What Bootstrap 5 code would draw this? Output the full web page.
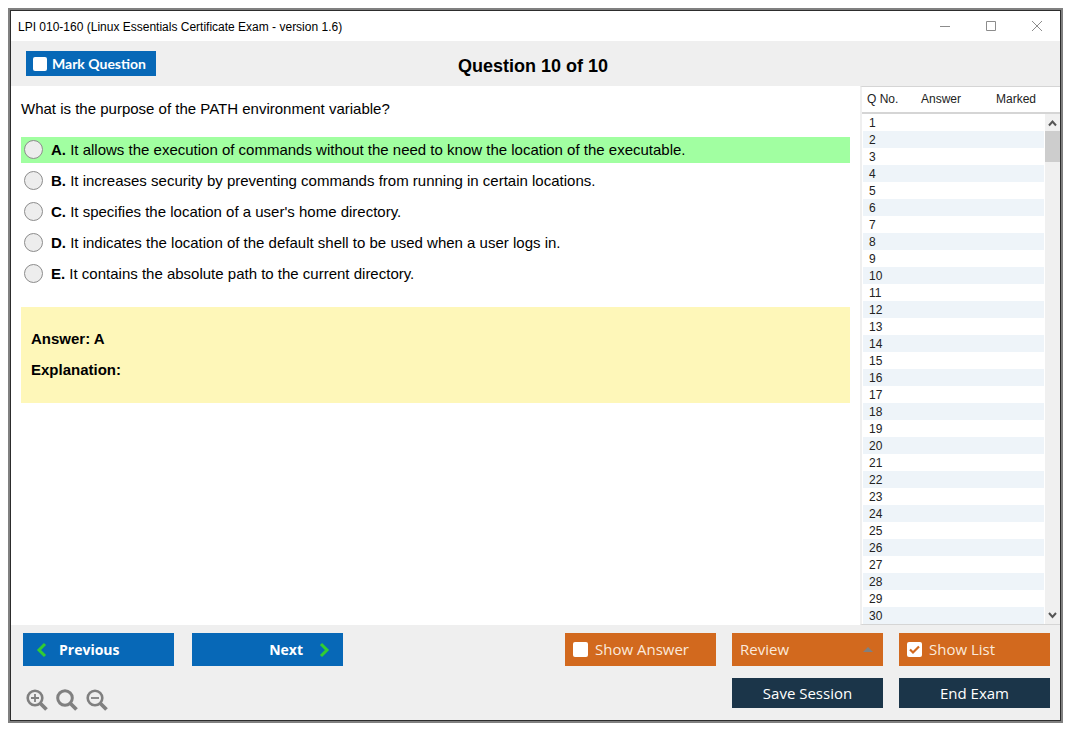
<!DOCTYPE html>
<html lang="en">
<head>
<meta charset="utf-8">
<meta name="viewport" content="width=device-width, initial-scale=1">
<title>LPI 010-160 Exam</title>
<link href="https://cdn.jsdelivr.net/npm/bootstrap@5.3.0/dist/css/bootstrap.min.css" rel="stylesheet">
<style>
  body { font-family: "Liberation Sans", Arial, sans-serif; font-size: 15px; color: #000; background: #fff; padding: 8px 12px 12px 8px; min-height: 100vh; }
  .exam-window { border: 2px solid #808080; }
  .exam-inner { border: 1px solid #2d2d2d; }
  .titlebar { height: 30px; padding: 2px 17px 0 7px; font-size: 12px; }
  .win-controls { gap: 34px; padding-bottom: 2px; }
  .win-btn { border: 0; background: none; padding: 0; width: 12px; height: 12px; display: flex; }
  .exam-head { display: grid; grid-template-columns: 1fr auto 1fr; height: 45px; padding: 0 20px 0 15px; background: #efefef; }
  .exam-head h1 { font-size: 18px; line-height: 24px; padding-top: 4px; }
  .flat { border: 0; border-radius: 0; font-family: "Open Sans", "Noto Sans", sans-serif; color: #fff; display: flex; align-items: center; }
  .flat input { appearance: none; flex: none; border-radius: 2px; background: #fff; margin: 0; }
  .mark-q { background: #0768b7; width: 130px; height: 25px; padding: 0 7px; gap: 5px; font-family: Lato, "Open Sans", sans-serif; font-size: 14px; font-weight: 700; }
  .mark-q input { width: 14px; height: 14px; }
  .question-pane { padding: 10px 10px 20px; min-width: 0; }
  .question-text { line-height: 26px; margin-bottom: 15px; }
  .option { min-height: 26px; line-height: 26px; padding-left: 3px; gap: 8px; margin-bottom: 5px; }
  .option.correct { background: #a1ffa1; }
  .option input { appearance: none; flex: none; width: 19px; height: 19px; margin: 0 0 1px; border: 1px solid #8c8c8c; border-radius: 50%; background: #ededed; }
  .option input:checked { background: #555; box-shadow: inset 0 0 0 4px #ededed; }
  .answer-box { background: #fef7b9; margin-top: 20px; padding: 19px 10px 21px; line-height: 25px; font-weight: 700; }
  .answer-box p { margin: 0; }
  .answer-box p + p { margin-top: 6px; }
  .q-list { width: 200px; flex: none; border-left: 2px solid #efefef; border-top: 1px solid #d5d5d5; border-bottom: 1px solid #d5d5d5; font-size: 12px; color: #222; }
  .q-head { height: 27px; border-bottom: 2px solid #d5d5d5; padding-bottom: 1px; }
  .q-head span:nth-child(1) { width: 54px; padding-left: 5px; }
  .q-head span:nth-child(2) { width: 75px; padding-left: 5px; }
  .q-head span:nth-child(3) { padding-left: 5px; }
  .q-rows { padding-left: 1px; }
  .q-table { border-collapse: collapse; width: 100%; }
  .q-table td { height: 17px; line-height: 15px; padding: 2px 0 0 6px; }
  .q-table tr:nth-child(even) { background: #eef4f9; }
  .scroll-track { width: 15px; flex: none; margin-left: 1px; background: #f0f0f0; }
  .scroll-track svg { flex: none; }
  .scroll-thumb { height: 31px; background: #cdcdcd; }
  .exam-foot { background: #efefef; padding: 8px 10px 9px 12px; }
  .foot-btn { width: 151px; height: 33px; padding: 0 8px; font-size: 15px; }
  .blue { background: #0768b7; font-weight: 700; font-size: 14px; padding: 0 13px; }
  .orange { background: #d2691e; color: #fbe9dc; gap: 7px; }
  .orange input { width: 15px; height: 15px; }
  .orange input:checked { background: #fff url("data:image/svg+xml,%3Csvg xmlns='http://www.w3.org/2000/svg' viewBox='0 0 15 15'%3E%3Cpath d='M3 7.5l3 3 6-6' fill='none' stroke='%23d2691e' stroke-width='2.2'/%3E%3C/svg%3E"); }
  .navy { background: #1b3549; height: 30px; justify-content: center; }
  select.foot-btn { appearance: none; }
  .review-caret { position: absolute; right: 9px; top: 13px; pointer-events: none; }
  .nav-pair { gap: 18px; }
  .zoom-btn { border: 0; background: none; padding: 0; width: 22px; height: 22px; display: flex; }
  .zoom-row { gap: 8px; padding: 15px 0 0 3px; }
</style>
</head>
<body>
<div class="exam-window">
<div class="exam-inner">
  <header class="titlebar d-flex align-items-center justify-content-between">
    <span>LPI 010-160 (Linux Essentials Certificate Exam - version 1.6)</span>
    <div class="win-controls d-flex align-items-center">
      <button class="win-btn" aria-label="Minimize"><svg width="12" height="12"><path d="M1 6.5h10" stroke="#8c8c8c"/></svg></button>
      <button class="win-btn" aria-label="Maximize"><svg width="12" height="12"><path d="M1.500 1.500h9v9h-9z" fill="none" stroke="#8c8c8c"/></svg></button>
      <button class="win-btn" aria-label="Close"><svg width="12" height="12"><path d="M1 1l10 10M11 1L1 11" stroke="#8c8c8c"/></svg></button>
    </div>
  </header>

  <div class="exam-head align-items-center">
    <label class="flat mark-q"><input type="checkbox"> Mark Question</label>
    <h1 class="m-0 fw-bold">Question 10 of 10</h1>
  </div>

  <div class="d-flex">
    <main class="question-pane flex-grow-1">
      <p class="question-text">What is the purpose of the PATH environment variable?</p>
      <label class="option correct d-flex align-items-center"><input type="radio" name="choice"><span><b>A.</b> It allows the execution of commands without the need to know the location of the executable.</span></label>
      <label class="option d-flex align-items-center"><input type="radio" name="choice"><span><b>B.</b> It increases security by preventing commands from running in certain locations.</span></label>
      <label class="option d-flex align-items-center"><input type="radio" name="choice"><span><b>C.</b> It specifies the location of a user's home directory.</span></label>
      <label class="option d-flex align-items-center"><input type="radio" name="choice"><span><b>D.</b> It indicates the location of the default shell to be used when a user logs in.</span></label>
      <label class="option m-0 d-flex align-items-center"><input type="radio" name="choice"><span><b>E.</b> It contains the absolute path to the current directory.</span></label>
      <section class="answer-box">
        <p>Answer: A</p>
        <p>Explanation:</p>
      </section>
    </main>

    <aside class="q-list">
      <div class="q-head d-flex align-items-center"><span>Q No.</span><span>Answer</span><span>Marked</span></div>
      <div class="d-flex">
        <div class="q-rows flex-grow-1"><table class="q-table" aria-label="Questions"><tbody id="rows"></tbody></table></div>
        <div class="scroll-track d-flex flex-column">
          <svg width="15" height="17"><path d="M4 11.500l3.500-4 3.500 4" fill="none" stroke="#555" stroke-width="2"/></svg>
          <div class="scroll-thumb"></div>
          <svg class="mt-auto" width="15" height="17"><path d="M4 6l3.500 4 3.500-4" fill="none" stroke="#555" stroke-width="2"/></svg>
        </div>
      </div>
    </aside>
  </div>

  <footer class="exam-foot d-flex justify-content-between">
    <div>
      <div class="nav-pair d-flex">
        <button class="flat foot-btn blue"><svg class="me-2" width="11" height="16"><path d="M9 2L3 8l6 6" fill="none" stroke="#32cd32" stroke-width="3"/></svg><span class="ms-1">Previous</span></button>
        <button class="flat foot-btn blue justify-content-end"><span class="me-2">Next</span><svg class="ms-2" width="11" height="16"><path d="M2 2l6 6-6 6" fill="none" stroke="#32cd32" stroke-width="3"/></svg></button>
      </div>
      <div class="zoom-row d-flex mt-2">
        <button class="zoom-btn" aria-label="Zoom in"><svg width="22" height="22" fill="none" stroke="#808080"><circle cx="9" cy="9" r="7.300" stroke-width="2.600"/><path d="M14 14l6.500 6.500" stroke-width="3.800"/><path d="M5 9h8M9 5v8" stroke-width="1.800"/></svg></button>
        <button class="zoom-btn" aria-label="Reset zoom"><svg width="22" height="22" fill="none" stroke="#808080"><circle cx="9" cy="9" r="7.300" stroke-width="3"/><path d="M14 14l6.500 6.500" stroke-width="3.800"/></svg></button>
        <button class="zoom-btn" aria-label="Zoom out"><svg width="22" height="22" fill="none" stroke="#808080"><circle cx="9" cy="9" r="7.300" stroke-width="2.600"/><path d="M14 14l6.500 6.500" stroke-width="3.800"/><path d="M5 9h8" stroke-width="1.800"/></svg></button>
      </div>
    </div>
    <div>
      <div class="d-flex gap-3">
        <label class="flat foot-btn orange"><input type="checkbox"> Show Answer</label>
        <div class="position-relative">
          <select class="flat foot-btn orange" aria-label="Review"><option>Review</option></select>
          <svg class="review-caret" width="12" height="7"><path d="M1 6l5-5 5 5z" fill="#808080"/></svg>
        </div>
        <label class="flat foot-btn orange"><input type="checkbox" checked> Show List</label>
      </div>
      <div class="d-flex gap-3 justify-content-end pt-1 mt-2">
        <button class="flat foot-btn navy">Save Session</button>
        <button class="flat foot-btn navy">End Exam</button>
      </div>
    </div>
  </footer>
</div>
</div>
<script>
  document.getElementById('rows').innerHTML = Array.from({ length: 30 }, (_, i) =>
    '<tr><td>' + (i + 1) + '</td><td></td><td></td></tr>').join('');
</script>
<script src="https://cdn.jsdelivr.net/npm/bootstrap@5.3.0/dist/js/bootstrap.bundle.min.js"></script>
</body>
</html>
